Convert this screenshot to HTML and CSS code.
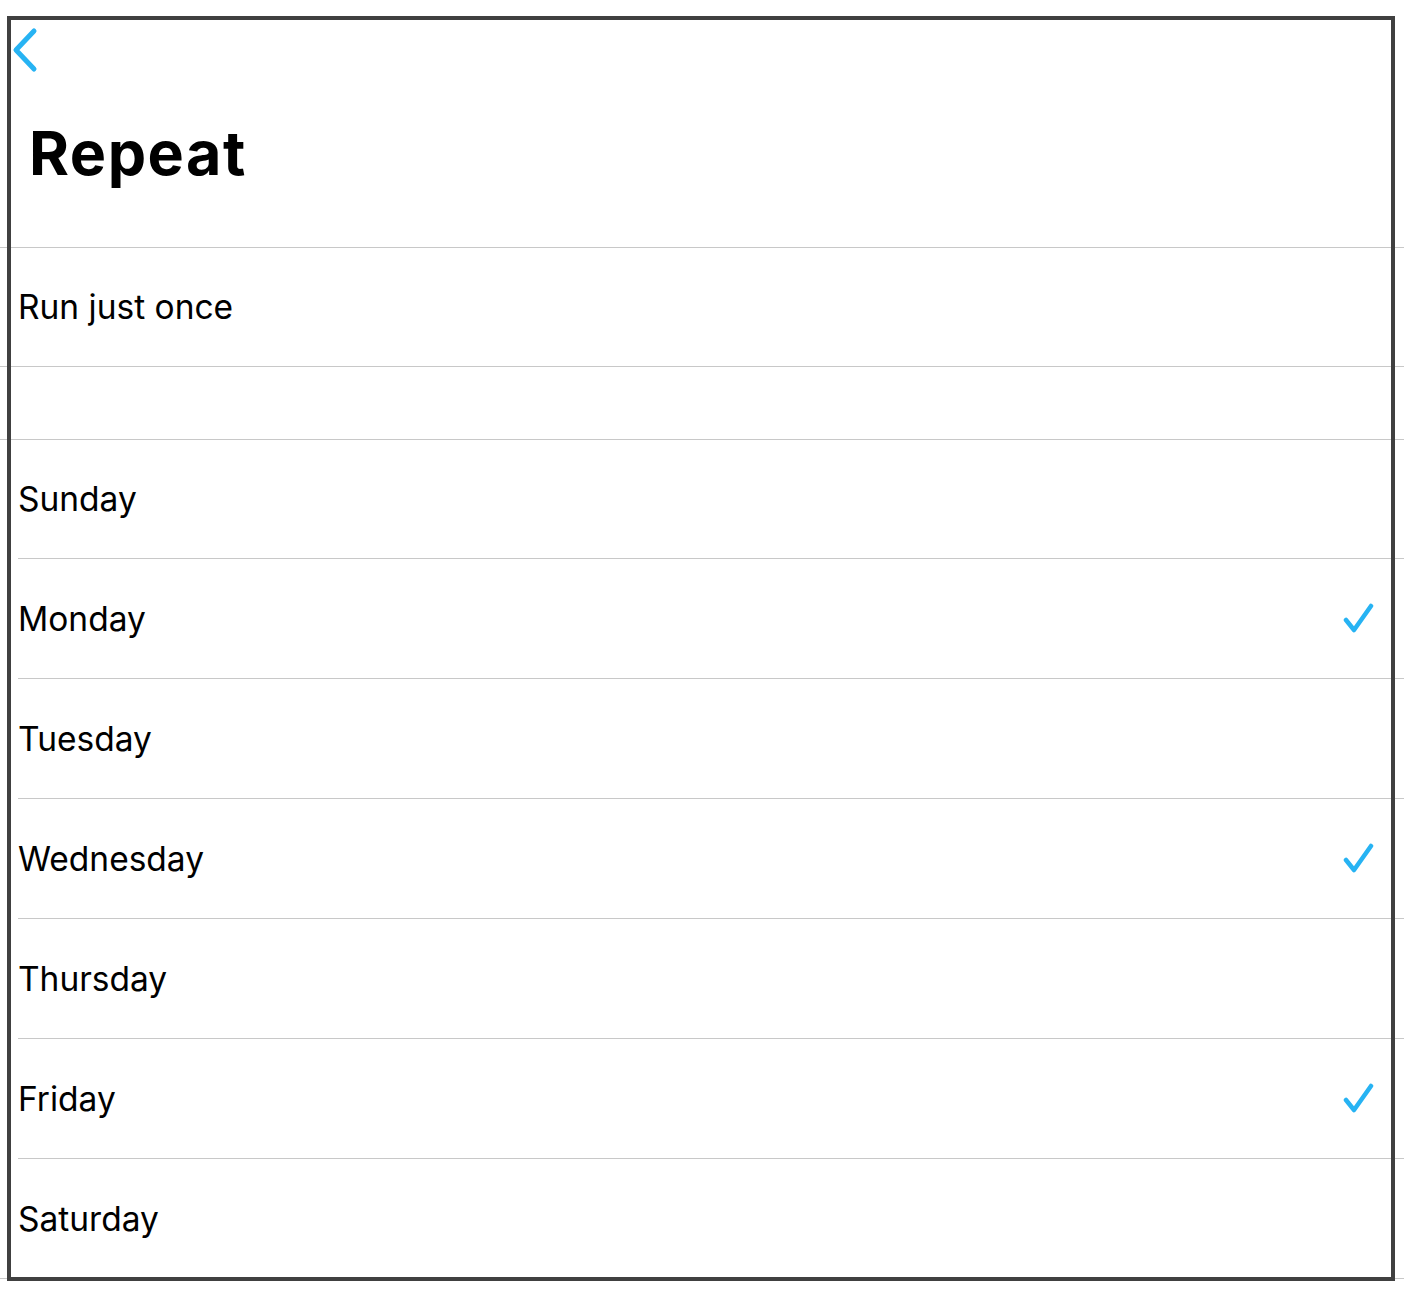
FILE: index.html
```html
<!DOCTYPE html>
<html>
<head>
    <title>Repeat</title>
    <link rel="stylesheet" href="styles.css">
</head>
<body>
    <div class="screen">
        <!-- Navigation bar -->
        <div class="nav-bar">
            <button class="back-button" aria-label="Back">
                <svg width="26" height="46" viewBox="0 0 26 46">
                    <polyline points="22,4 4,23 22,42" fill="none" stroke="#27b3f3" stroke-width="5" stroke-linecap="round" stroke-linejoin="round"/>
                </svg>
            </button>
        </div>
        <h1 class="title">Repeat</h1>

        <!-- Run once -->
        <div class="group">
            <div class="row row-full">
                <span class="row-label">Run just once</span>
            </div>
        </div>

        <div class="group-gap"></div>

        <!-- Days of the week -->
        <div class="group">
            <div class="row"><span class="row-label">Sunday</span></div>
            <div class="row">
                <span class="row-label">Monday</span>
                <svg class="check" width="34" height="32" viewBox="0 0 34 32">
                    <polyline points="3,17 11,27 28,3" fill="none" stroke="#27b3f3" stroke-width="4.5" stroke-linecap="round" stroke-linejoin="round"/>
                </svg>
            </div>
            <div class="row"><span class="row-label">Tuesday</span></div>
            <div class="row">
                <span class="row-label">Wednesday</span>
                <svg class="check" width="34" height="32" viewBox="0 0 34 32">
                    <polyline points="3,17 11,27 28,3" fill="none" stroke="#27b3f3" stroke-width="4.5" stroke-linecap="round" stroke-linejoin="round"/>
                </svg>
            </div>
            <div class="row"><span class="row-label">Thursday</span></div>
            <div class="row">
                <span class="row-label">Friday</span>
                <svg class="check" width="34" height="32" viewBox="0 0 34 32">
                    <polyline points="3,17 11,27 28,3" fill="none" stroke="#27b3f3" stroke-width="4.5" stroke-linecap="round" stroke-linejoin="round"/>
                </svg>
            </div>
            <div class="row row-full"><span class="row-label">Saturday</span></div>
        </div>

        <!-- device frame drawn over the content -->
        <div class="frame"></div>
    </div>
</body>
</html>
```
FILE: styles.css
```css
body {
    margin: 0;
    background-color: #fff;
    font-family: Inter, "Noto Sans", sans-serif;
    color: #000;
}

.screen {
    position: relative;
    width: 1404px;
    height: 1294px;
    overflow: hidden;
}

.frame {
    position: absolute;
    left: 7px;
    top: 16px;
    width: 1380px;
    height: 1257px;
    border: 4px solid #404040;
    pointer-events: none;
}

.nav-bar {
    height: 90px;
    padding-top: 27px;
    padding-left: 12px;
    box-sizing: border-box;
}

.back-button {
    background: none;
    border: none;
    padding: 0;
    display: block;
    cursor: pointer;
}

.back-button svg {
    display: block;
}

.title {
    margin: 0;
    height: 157px;
    padding-left: 29px;
    padding-top: 33px;
    box-sizing: border-box;
    font-size: 61px;
    font-weight: 700;
    letter-spacing: 1.5px;
    line-height: 1;
}

.group {
    border-top: 1px solid #c8c8c8;
}

.group-gap {
    height: 72px;
}

.row {
    display: flex;
    align-items: center;
    justify-content: space-between;
    height: 119px;
    margin-left: 18px;
    padding-right: 27px;
    border-bottom: 1px solid #c8c8c8;
}

.row:first-child {
    height: 118px;
}

.row-full {
    margin-left: 0;
    padding-left: 18px;
}

.row-label {
    font-size: 33.5px;
    font-weight: 400;
}

.check {
    display: block;
}
```
